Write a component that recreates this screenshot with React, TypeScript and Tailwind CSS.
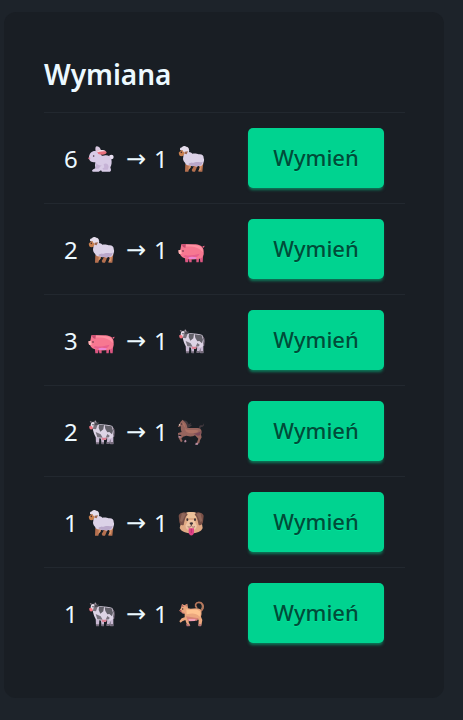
import type { ReactNode } from "react";

type Animal = "rabbit" | "sheep" | "pig" | "cow" | "horse" | "dog" | "cat";

const labels: Record<Animal, string> = {
  rabbit: "królik",
  sheep: "owca",
  pig: "świnia",
  cow: "krowa",
  horse: "koń",
  dog: "mały pies",
  cat: "kot",
};

const drawings: Record<Animal, ReactNode> = {
  rabbit: (
    <>
      <circle cx="70" cy="33" r="7" fill="#e9e0f2" />
      <path d="M23 18C21 7 22 1 27 1c7 0 11 7 13 16z" fill="#d8c8e0" />
      <path d="M3 35c0-12 8-20 18-20 10 0 16 5 19 13 4 3 8 1 12 0 9-1 16 4 18 12 2 9 1 17-3 24l2 7c0 4-2 6-6 6H42l-3-4-7 4H15c-4 0-4-5 1-7l6-3-1-9 1-9C9 49 3 44 3 35z" fill="#d8cbe6" />
      <path d="M47 54c8-5 15 1 15 9l-3 8H46l-3-3 6-4z" fill="#c6b3d6" />
      <path d="M25 52c4 5 10 7 16 6l-10 10h-8z" fill="#c3b0d2" />
      <path d="M26 15c9-5 26-3 30 4 0 8-16 9-25 5z" fill="#e8707c" />
      <path d="M26 15c8-5 22-4 28 1-9 0-17 0-25 3z" fill="#eddce9" />
      <circle cx="17" cy="30" r="2.3" fill="#44313e" />
      <circle cx="4" cy="37" r="3" fill="#e9849c" />
    </>
  ),
  sheep: (
    <>
      <path d="M22 54l-1 23h10l5-20zM47 57l-1 7-5 8 3 5h7l6-14v-7zM61 54l4 11-4 12h12l3-26z" fill="#b5704f" />
      <path d="M33 55l-2 17 7-7 2-10zM61 55l5 9-5 11 8-3 3-18z" fill="#d99468" />
      <path d="M16 21c3-6 22-5 27 2 7-2 15 0 19 2 8-2 16 3 15 11 3 6 0 13-2 17-2 6-7 8-12 6-4 3-10 3-14 0-4 2-10 2-14-1-7 1-12-2-14-8-6-5-7-13-5-18z" fill="#dcd2e7" />
      <path d="M31 54c8-6 14-2 20-5 8-3 14 2 23-2-2 9-6 14-12 12-5 3-10 3-14 0-6 2-12 1-17-5z" fill="#baa8ca" />
      <path d="M10 12L2 20l2 8c3 4 9 4 13 0l6-14z" fill="#c97f4e" />
      <path d="M7 13c-3-5 1-9 5-9 2-5 9-5 13-2 5 0 8 4 8 9 2 5-1 9-5 9-4 5-9 3-9-2-4-1-6-3-5-6z" fill="#e5ddec" />
      <path d="M20 17l10-1-4 9-6-2z" fill="#9d6750" />
      <circle cx="10" cy="19" r="2.4" fill="#412b30" />
    </>
  ),
  pig: (
    <>
      <path d="M20 56l2 20h8l3-16zM32 62l2 14h7V61zM55 60v16h7l2-17zM64 55l3 21h7l2-28z" fill="#dc5681" />
      <path d="M7 39l3-17 10-1c14 2 31-1 43 3 11 3 15 12 14 24 0 10-5 16-13 17-14 3-30 3-43-1C11 61 7 55 6 51l-4-4v-7z" fill="#f77891" />
      <path d="M13 24c18-3 40 0 53 4 8 4 9 12 8 18C65 32 43 26 13 30z" fill="#ff91a2" />
      <path d="M22 54c12 4 30-1 43-4-6 14-20 14-34 13-8-1-12-3-15-5z" fill="#e8608d" />
      <path d="M31 61c8-3 16-2 25 0l-3 5H34z" fill="#ec86d2" />
      <path d="M11 22l13-1-2 12-8-4z" fill="#c74d70" />
      <path d="M1 40l8-2 2 12-8 1z" fill="#ffb2b2" />
      <circle cx="15" cy="42" r="2.5" fill="#4c2732" />
      <path d="M73 28l7-2-3 7z" fill="#e96586" />
    </>
  ),
  cow: (
    <>
      <path d="M74 25c7 7 4 19 3 29" fill="none" stroke="#8b7a8e" strokeWidth="3" />
      <path d="M23 50l1 25h9l1-17zM38 55l3 20h7V56zM58 53l-2 21h8l4-19zM67 49v26h9V47z" fill="#c8b8d2" />
      <path d="M20 18c18-4 38-1 53 3l4 16-2 18c-8 6-16 3-24 2-9 1-19 3-27-2-6-8-8-18-10-26z" fill="#ddd4e5" />
      <path d="M33 18h15l-2 13-9 7-5-11zM50 19l21 3 4 13-3 11-8-7-6 1-6-10z" fill="#626069" />
      <path d="M23 39l15 7 6 10-16-1zM58 45l7 5-2 5-10 1z" fill="#77727d" />
      <path d="M40 56h17l-3 7H43z" fill="#d98194" />
      <path d="M12 10l11-3 7 7-6 17-12-2z" fill="#77717b" />
      <path d="M9 13l6-5 4 4-4 16-8-3z" fill="#e5dde9" />
      <path d="M9 12L5 6l8 3zM20 9l1-6 5 7z" fill="#a89ba8" />
      <path d="M21 13l12-3-4 8-8 1z" fill="#4d4b53" />
      <path d="M4 21l8 1 3 6-6 4-5-4z" fill="#f47480" />
      <circle cx="15" cy="17" r="2" fill="#302e37" />
      <path d="M24 70h9v6h-9zM41 70h7v6h-7zM56 69h8v6h-8zM67 69h9v7h-9z" fill="#756b7b" />
    </>
  ),
  horse: (
    <>
      <path d="M64 29c-3-8 2-12 7-10 3 1 5-1 5-6 4 7 0 11-6 11-3 1-2 4-3 6z" fill="#41383e" />
      <path d="M15 5c11-2 15 5 17 11l8-5-3 7 6-1-8 8-11 1z" fill="#40373d" />
      <path d="M3 17l5-9 6-6 4 5c7 5 9 13 10 19 13 3 25-1 36 2 8 4 8 12 5 19l2 8-5 9-2 9h-8l5-14-10-10c-6 4-12 4-18 3l-8-2-10 3-5 6 4 7-5 4-7-13 9-9-10-1v10l-6-1 1-13 15-4c-3-6-3-12-2-17l-6 1-4 1z" fill="#96645d" />
      <path d="M11 11l7 2c4 7 3 15 7 18 11 4 25 0 37 4-7 8-21 9-31 6-8-1-10-7-9-14z" fill="#ad7265" />
      <path d="M45 43c9 2 17-2 23-7l-1 13-8 1z" fill="#7a4859" />
      <circle cx="11" cy="15" r="2" fill="#342b31" />
      <path d="M2 50l6 2-1 5-6-2zM18 66l5-4 3 5-5 4zM53 71l8 1-1 5-8 1z" fill="#b78ba0" />
      <path d="M2 17l4-2v6z" fill="#efdac6" />
    </>
  ),
  dog: (
    <>
      <path d="M15 18C19 8 27 6 40 6s24 5 29 18l5 30c-4 11-18 16-34 16S10 65 5 54z" fill="#e0aa85" />
      <path d="M23 10c10-6 25-5 36 2l-5 12H26z" fill="#edc29a" />
      <path d="M13 8c7-3 14 0 16 6-8 6-10 22-12 31-6 3-12-2-13-9L2 17c2-5 5-9 11-9zM66 8c-7-3-14 0-16 6 8 6 10 22 12 31 6 3 12-2 13-9l2-19c-2-5-5-9-11-9z" fill="#795047" />
      <path d="M12 9l12 2-12 25-6-3zM67 9l-12 2 12 25 6-3z" fill="#91675a" />
      <path d="M31 30h17l8 16c1 10-8 16-17 16s-18-6-16-16z" fill="#efc6a4" />
      <ellipse cx="28" cy="29" rx="3" ry="4" fill="#413436" />
      <ellipse cx="51" cy="29" rx="3" ry="4" fill="#413436" />
      <path d="M35 38c2-2 8-2 10 0 1 3-3 6-5 7-2-1-6-4-5-7z" fill="#3d3236" />
      <path d="M40 45c0 6-6 8-11 5M40 45c0 6 6 8 11 5" fill="none" stroke="#704850" strokeWidth="2" />
      <path d="M32 55h16v11c0 14-16 14-16 0z" fill="#e04285" />
      <path d="M40 56v13" stroke="#a82665" strokeWidth="2" />
    </>
  ),
  cat: (
    <>
      <path d="M65 32c11-5 13-15 9-22-5-8-18-8-21 0-1 4 0 7 3 9" fill="none" stroke="#b8775c" strokeWidth="5" strokeLinecap="round" />
      <path d="M66 28c8-7 8-14 4-18" fill="none" stroke="#f3b78a" strokeWidth="2" />
      <path d="M9 21l3-12 7 4 9-5 2 14c12 3 27-3 35 2 8 6 6 17 4 23l4 10-3 17h-9l1-17-6-6c-8 7-16 6-23 4l-1 9 5 10h-9l-6-17-9 4-5 4-4-4 7-9 9-3V38l-8-3-8-6z" fill="#eca77e" />
      <path d="M25 25c16 4 29-4 41 6 3 6 1 11-1 16-12-12-24-10-39-7z" fill="#ffc390" />
      <path d="M24 46l38 6-5 7-27 1zM10 31l11 6-7 1z" fill="#d98377" />
      <path d="M31 54h22l-3 6-16 1z" fill="#f39fb5" />
      <path d="M12 10l7 8-8-1zM22 13l5-3-2 8z" fill="#b96764" />
      <circle cx="14" cy="24" r="2.3" fill="#48302e" />
      <path d="M4 28l5-1 3 4-5 2z" fill="#9d4a53" />
      <path d="M30 68l5 8h-9l-2-6zM69 69v7h-7v-7z" fill="#b57279" />
    </>
  ),
};

function AnimalIcon({ animal }: { animal: Animal }) {
  return (
    <svg viewBox="0 0 81 78" className="h-[26px] w-[27px] shrink-0" role="img" aria-label={labels[animal]}>
      {drawings[animal]}
    </svg>
  );
}

const exchanges: { count: number; from: Animal; to: Animal }[] = [
  { count: 6, from: "rabbit", to: "sheep" },
  { count: 2, from: "sheep", to: "pig" },
  { count: 3, from: "pig", to: "cow" },
  { count: 2, from: "cow", to: "horse" },
  { count: 1, from: "sheep", to: "dog" },
  { count: 1, from: "cow", to: "cat" },
];

export default function App() {
  return (
    <main className="min-h-screen bg-[#1d232a] pt-3 pr-[19px] pb-5 pl-1 font-['Noto_Sans','Open_Sans',sans-serif] text-[#ecf9ff]">
      <section className="rounded-xl bg-[#191e24] p-10 pr-[39px]">
        <h2 className="pb-4 text-[28px] leading-[44px] font-semibold">Wymiana</h2>
        <table className="w-full border-collapse">
          <tbody>
            {exchanges.map(({ count, from, to }) => (
              <tr key={`${from}-${to}`} className="border-t border-[#22282f]">
                <td className="py-[15px] pl-5 text-2xl">
                  <div className="flex items-center pt-0.5">
                    <span className="w-6">{count}</span>
                    <AnimalIcon animal={from} />
                    <span className="w-[39px] pl-[11px] font-['DejaVu_Sans',sans-serif] leading-none">→</span>
                    <span className="w-6">1</span>
                    <AnimalIcon animal={to} />
                  </div>
                </td>
                <td className="py-[15px] pr-[21px] text-right">
                  <button
                    type="button"
                    className="inline-flex h-[60px] w-[136px] cursor-pointer items-center justify-center rounded-[5px] bg-[#00d390] pb-0.5 align-top text-[22px] font-medium text-[#004c39] shadow-[0_3px_3px_-1px_#00d39080] text-shadow-[0_1px_#00e59c] hover:bg-[#00c385]"
                  >
                    Wymień
                  </button>
                </td>
              </tr>
            ))}
          </tbody>
        </table>
      </section>
    </main>
  );
}
